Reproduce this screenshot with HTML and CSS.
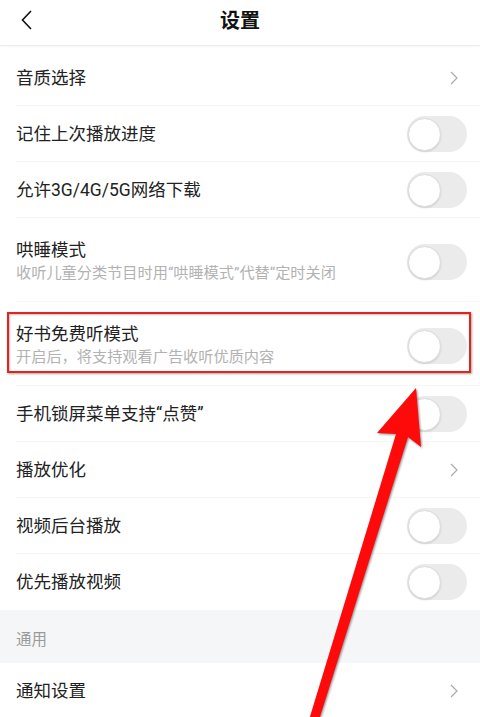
FILE: index.html
```html
<!DOCTYPE html>
<html lang="zh-CN">
<head>
  <meta charset="UTF-8" />
  <meta name="viewport" content="width=device-width, initial-scale=1.0"/>
  <title>设置</title>
  <link rel="stylesheet" href="styles.css">
</head>
<body>
  <header class="topbar">
    <span class="back">
      <svg width="12" height="20" viewBox="0 0 12 20"><path d="M10 1 L1.5 10 L10 19" fill="none" stroke="#111" stroke-width="1.6"/></svg>
    </span>
    <h1>设置</h1>
  </header>

  <div class="list">
    <div class="row">
      <span class="title">音质选择</span>
      <span class="chevron"><svg width="8" height="14" viewBox="0 0 8 14"><path d="M1 1 L7 7 L1 13" fill="none" stroke="#aaa" stroke-width="1.2"/></svg></span>
    </div>
    <div class="row">
      <span class="title">记住上次播放进度</span>
      <span class="switch"><span class="knob"></span></span>
    </div>
    <div class="row">
      <span class="title">允许3G/4G/5G网络下载</span>
      <span class="switch"><span class="knob"></span></span>
    </div>
    <div class="row tall">
      <div class="text">
        <div class="title">哄睡模式</div>
        <div class="sub">收听儿童分类节目时用“哄睡模式”代替“定时关闭</div>
      </div>
      <span class="switch"><span class="knob"></span></span>
    </div>
    <div class="row tall marked">
      <div class="text">
        <div class="title">好书免费听模式</div>
        <div class="sub">开启后，将支持观看广告收听优质内容</div>
      </div>
      <span class="switch"><span class="knob"></span></span>
    </div>
    <div class="row">
      <span class="title">手机锁屏菜单支持“点赞”</span>
      <span class="switch"><span class="knob"></span></span>
    </div>
    <div class="row">
      <span class="title">播放优化</span>
      <span class="chevron"><svg width="8" height="14" viewBox="0 0 8 14"><path d="M1 1 L7 7 L1 13" fill="none" stroke="#aaa" stroke-width="1.2"/></svg></span>
    </div>
    <div class="row">
      <span class="title">视频后台播放</span>
      <span class="switch"><span class="knob"></span></span>
    </div>
    <div class="row last">
      <span class="title">优先播放视频</span>
      <span class="switch"><span class="knob"></span></span>
    </div>
  </div>

  <div class="section">通用</div>

  <div class="list">
    <div class="row">
      <span class="title">通知设置</span>
      <span class="chevron"><svg width="8" height="14" viewBox="0 0 8 14"><path d="M1 1 L7 7 L1 13" fill="none" stroke="#aaa" stroke-width="1.2"/></svg></span>
    </div>
  </div>

  <!-- annotation arrow drawn over the screenshot -->
  <svg class="arrow" width="480" height="717" viewBox="0 0 480 717">
    <polygon points="416,388 421,447 408,437 319,720 309,720 396,434 377,433" fill="#ff0a0a"/>
  </svg>
</body>
</html>
```

FILE: styles.css
```css
body {
  font-family: Roboto, "Noto Sans CJK SC", sans-serif;
  margin: 0;
  padding: 0;
  background-color: #fff;
  color: #222;
  height: 717px;
  overflow: hidden;
  position: relative;
}

.topbar {
  height: 45px;
  border-bottom: 1px solid #ececec;
  box-shadow: 0 1px 3px rgba(0,0,0,0.04);
  display: flex;
  align-items: center;
  justify-content: center;
  position: relative;
  margin-bottom: 4px;
}

.topbar h1 {
  margin: 0;
  font-size: 20px;
  font-weight: bold;
  color: #111;
  line-height: 1;
  margin-top: -3px;
}

.back {
  position: absolute;
  left: 21px;
  top: 10px;
  display: flex;
}

.row {
  height: 56px;
  display: flex;
  align-items: center;
  justify-content: space-between;
  padding: 0 13px 0 16px;
  position: relative;
  box-sizing: border-box;
}

.row::after {
  content: "";
  position: absolute;
  left: 16px;
  right: 0;
  bottom: 0;
  height: 1px;
  background-color: #f6f6f6;
}

.row.last::after {
  display: none;
}

.row.tall {
  height: 84px;
  align-items: flex-start;
  padding-top: 20px;
}

.row.tall .switch {
  margin-top: 6px;
}

.title {
  font-size: 17.5px;
  line-height: 24px;
  color: #222;
}

.sub {
  font-size: 15.2px;
  line-height: 20px;
  margin-top: 1px;
  color: #b2b2b2;
  white-space: nowrap;
}

.chevron {
  display: flex;
  margin-right: 9px;
}

.switch {
  width: 60px;
  height: 36px;
  border-radius: 18px;
  background-color: #ebebeb;
  display: flex;
  align-items: center;
  padding-left: 1px;
  box-sizing: border-box;
  flex-shrink: 0;
}

.knob {
  width: 33px;
  height: 33px;
  border-radius: 50%;
  background-color: #fff;
  border: 1px solid #dcdcdc;
  box-shadow: 0 1px 2px rgba(0,0,0,0.12);
  box-sizing: border-box;
}

.marked::before {
  content: "";
  position: absolute;
  left: 7px;
  right: 9px;
  top: 10px;
  bottom: 13px;
  border: 2px solid #e2231f;
  box-shadow: 1px 1px 2px rgba(0,0,0,0.35), inset 1px 1px 2px rgba(0,0,0,0.25);
  pointer-events: none;
}

.section {
  height: 53px;
  background-color: #f5f6f7;
  color: #9a9a9a;
  font-size: 15.5px;
  line-height: 22px;
  padding: 19px 16px 0;
  box-sizing: border-box;
}

.arrow {
  position: absolute;
  left: 0;
  top: 0;
  filter: drop-shadow(1px 1px 1px rgba(0,0,0,0.45));
}
```
